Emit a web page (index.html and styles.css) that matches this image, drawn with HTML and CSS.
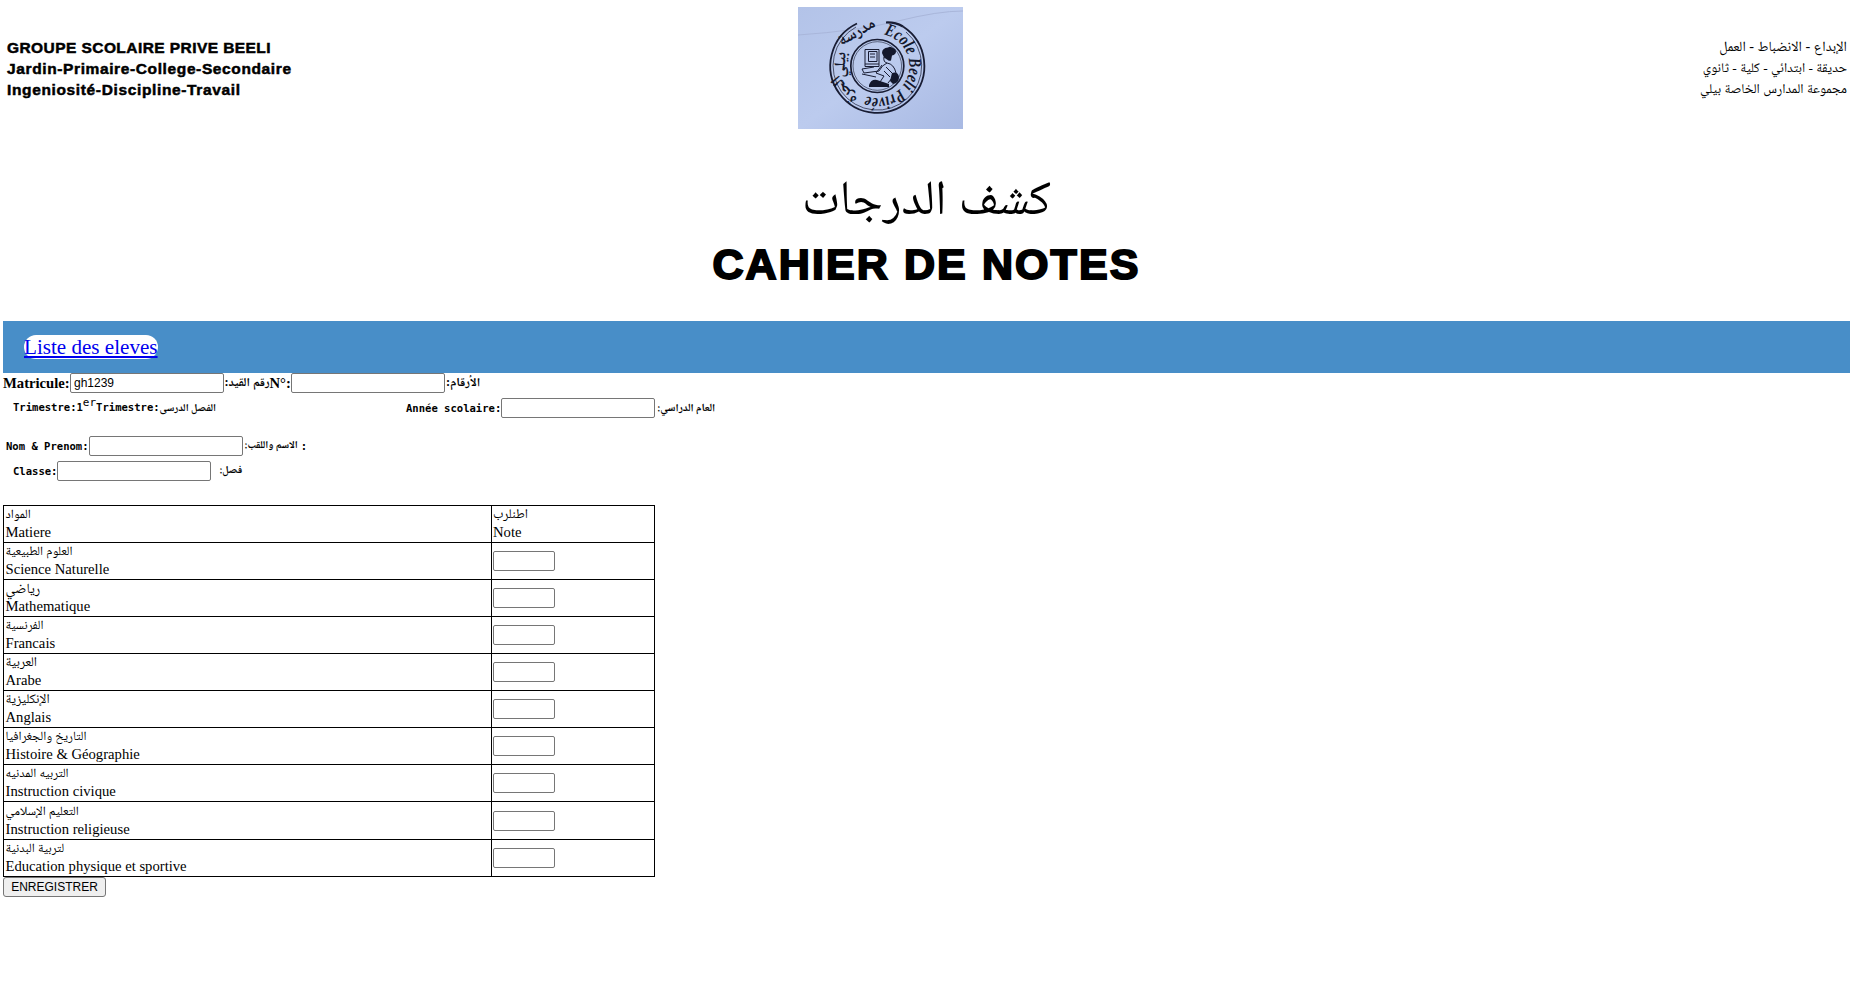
FILE: index.html
```
<!DOCTYPE html>
<html lang="fr">
<head>
<meta charset="utf-8">
<title>Cahier de notes</title>
<link rel="stylesheet" href="styles.css">
</head>
<body>
<header class="head">
  <div class="school">
    <p class="l1">GROUPE SCOLAIRE PRIVE BEELI</p>
    <p class="l2">Jardin-Primaire-College-Secondaire</p>
    <p class="l3">Ingeniosité-Discipline-Travail</p>
  </div>
  <svg class="logo" viewBox="0 0 165 122" width="165" height="122">
    <defs>
      <linearGradient id="paper" x1="0" y1="0" x2="1" y2="1"><stop offset="0" stop-color="#b3c3e8"/><stop offset=".5" stop-color="#bccbee"/><stop offset="1" stop-color="#a8b9e3"/></linearGradient>
      <path id="arc" d="M86 27.700 A32 32 0 1 1 63.300 86.700"/>
    </defs>
    <rect width="165" height="122" fill="url(#paper)"/>
    <path d="M0 28 Q60 24 100 14 T165 4" fill="none" stroke="#a9b6da" stroke-width="1"/>
    <g fill="none" stroke="#181c33">
      <path d="M59 16.500 A47 47 0 1 0 105 19.500" stroke-width="1.800"/>
      <path d="M88 15.500 Q97 15 105 19.500" stroke-width="2.200"/>
      <path d="M58 20 A44.300 44.300 0 1 0 108 25" stroke-width=".7"/>
      <circle cx="79.300" cy="59" r="26.500" stroke-width="1.700"/>
      <circle cx="79.300" cy="59" r="24.300" stroke-width=".6"/>
    </g>
    <g fill="#14182c">
      <text class="seal"><textPath href="#arc" textLength="105" lengthAdjust="spacingAndGlyphs">Ecole Beeli Privée</textPath></text>
      <text class="seal-ar" transform="translate(61 29) rotate(-30)">مدرسة</text>
      <text class="seal-ar" transform="translate(47 58) rotate(-86)">بيلي</text>
      <text class="seal-ar" transform="translate(50 80) rotate(-128)">الحرة</text>
      <path d="M84 46q0-5 6-5.500q2-1.500 4 0q4 1 4 4q0 3-4 4l-1 5q-2 1-4-1l-3-2z"/>
      <path d="M71 78q2-6 8-5l12 4v3h-20zM94 66q6-2 7 4q0 6-6 7l-3-3z"/>
    </g>
    <g fill="none" stroke="#181c33" stroke-width="1">
      <path d="M67 42.500h14v17h-14zM70.500 44.500h8.500v10h-8.500zM72 47h5M72 50h5M67 57h14"/>
      <path d="M86 50q-1 5 3 6q-5 2-8 8l-15 2l-2-4l12-2M89 56q7 1 9 10M84 58l-6 8l8 3l-4 6M98 66l-8 10M64 67l14 3M88 60l6 6M86 64l6 6"/>
    </g>
  </svg>
  <div class="school-ar" dir="rtl">
    <p class="r1">الإبداع - الانضباط - العمل</p>
    <p class="r2">حديقة - ابتدائي - كلية - ثانوي</p>
    <p class="r3">مجموعة المدارس الخاصة بيلي</p>
  </div>
</header>
<div class="titles">
  <p class="title-ar">كشف الدرجات</p>
  <h1>CAHIER DE NOTES</h1>
</div>
<nav><a href="#">Liste des eleves</a></nav>
<form>
  <div class="row top"><b class="f-mat">Matricule:</b><input value="gh1239"><b class="f-mat2" dir="rtl">رقم القيد:</b><b class="f-no">N°:</b><input><b class="f-nb" dir="rtl">الأرقام:</b></div>
  <div class="row mono tri"><b class="f-tri">Trimestre:1<sup>er</sup>Trimestre:<span>الفصل الدرسى</span></b><b>Année scolaire:</b><input><b class="after year" dir="rtl"><span>العام الدراسي:</span></b></div>
  <div class="row mono nom"><b>Nom &amp; Prenom:</b><input><b class="after" dir="rtl"><span>الاسم واللقب:</span></b><b class="end">:</b></div>
  <div class="row mono cls"><b>Classe:</b><input><b class="after wide" dir="rtl"><span>فصل:</span></b></div>
  <table>
    <tr><td><p class="ar">المواد</p><p>Matiere</p></td><td><p class="ar mid">اطنلرب</p><p>Note</p></td></tr>
    <tr><td><p class="ar">العلوم الطبيعية</p><p>Science Naturelle</p></td><td><input></td></tr>
    <tr><td><p class="ar large">رياضي</p><p>Mathematique</p></td><td><input></td></tr>
    <tr><td><p class="ar">الفرنسية</p><p>Francais</p></td><td><input></td></tr>
    <tr><td><p class="ar mid">العربية</p><p>Arabe</p></td><td><input></td></tr>
    <tr><td><p class="ar mid">الإنكليزية</p><p>Anglais</p></td><td><input></td></tr>
    <tr><td><p class="ar">التاريخ والجغرافيا</p><p>Histoire &amp; Géographie</p></td><td><input></td></tr>
    <tr><td><p class="ar">التربيه المدنيه</p><p>Instruction civique</p></td><td><input></td></tr>
    <tr class="tall"><td><p class="ar">التعليم الإسلامي</p><p>Instruction religieuse</p></td><td><input></td></tr>
    <tr><td><p class="ar">لتربية البدنية</p><p>Education physique et sportive</p></td><td><input></td></tr>
  </table>
  <button type="button">ENREGISTRER</button>
</form>
</body>
</html>
```
FILE: styles.css
```
* { box-sizing: border-box; }
body {
  margin: 0;
  padding: 0 4px 0 3px;
  background: #fff;
  color: #000;
  font: 14.67px "Liberation Serif", "Noto Naskh Arabic", "DejaVu Sans", serif;
}
p, h1 { margin: 0; }
.head {
  display: grid;
  grid-template-columns: 795px 165px 1fr;
  padding-top: 7px;
  height: 160px;
}
.school { padding: 30px 0 0 4px; }
.school p {
  font: bold 15.500px/21px "Liberation Sans", sans-serif;
  white-space: nowrap;
  -webkit-text-stroke: .5px #000;
}
.l1 { letter-spacing: .43px; }
.l2 { letter-spacing: .62px; }
.l3 { letter-spacing: .64px; }
.logo { display: block; }
.seal { font: italic bold 18px "Liberation Serif", serif; }
.seal-ar { font: bold 16px "Noto Naskh Arabic", "DejaVu Sans", serif; text-anchor: middle; }
.school-ar { padding: 29px 3px 0 0; }
.school-ar p { height: 21px; line-height: 21px; white-space: nowrap; }
.r1 { font-size: 14.200px; }
.r2 { font-size: 13.400px; }
.r3 { font-size: 13.550px; }
.titles { height: 161px; text-align: center; }
.title-ar { font-size: 48.700px; height: 76px; line-height: 77px; }
h1 {
  font: bold 43px/57px "Liberation Sans", sans-serif;
  letter-spacing: 2.100px;
  -webkit-text-stroke: 2px #000;
}
nav { height: 52px; background: #488ec8; padding: 14px 21px; }
nav a {
  display: inline-block;
  height: 24px;
  font-size: 21.100px;
  line-height: 24px;
  color: #0000ee;
  background: #fff;
  border-radius: 12px;
}
input {
  width: 154px;
  height: 20px;
  margin: 0;
  padding: 1px 3px;
  border: 1px solid #767676;
  border-radius: 2px;
  background: #fff;
  font: 12px "Liberation Sans", sans-serif;
}
.row { display: flex; align-items: center; height: 20px; white-space: nowrap; }
.row > b, .row > input { flex: none; }
.f-mat { width: 67px; }
.f-mat2 { width: 45.500px; font-size: 12.200px; }
.f-no { width: 21.500px; }
.f-nb { padding-left: 1px; font-size: 12.400px; }
.mono { font: bold 10.550px "DejaVu Sans Mono", "Noto Naskh Arabic", monospace; }
.mono span { font-family: "Noto Naskh Arabic", "DejaVu Sans", serif; }
.tri { margin-top: 5px; padding-left: 10px; }
.f-tri { width: 393px; padding-top: 1px; }
sup { font-size: 11px; font-weight: normal; line-height: 0; }
.after { padding-left: 2px; }
.year { font-size: 11px; }
.wide { padding-left: 8px; }
.end { padding-left: 3px; }
.nom { margin-top: 18px; padding-left: 3px; }
.cls { margin-top: 5px; padding-left: 10px; }
table { width: 652px; margin-top: 24px; border-collapse: collapse; table-layout: fixed; }
tr { height: 37px; }
.tall { height: 38px; }
td { border: 1px solid #000; padding: 0 0 0 1.500px; vertical-align: middle; }
td:first-child { width: 488px; }
td p { height: 17px; line-height: 17px; }
td .ar { font-size: 12.700px; line-height: 14px; }
td .mid { font-size: 13.400px; }
td .large { font-size: 14.200px; line-height: 14px; }
td input { display: block; width: 62px; }
td:last-child { padding-left: 1px; }
button {
  display: block;
  width: 103px;
  height: 20px;
  padding: 0;
  border: 1px solid #767676;
  border-radius: 3px;
  background: #efefef;
  font: 12px "Liberation Sans", sans-serif;
}
```
